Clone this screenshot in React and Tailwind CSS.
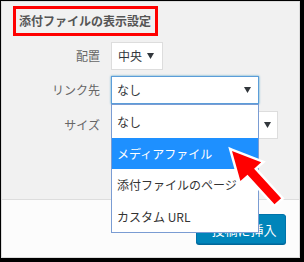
import React from "react";

const Arrow = () => (
  <svg width="7" height="6" viewBox="0 0 7 6" className="shrink-0">
    <polygon points="0,0 7,0 3.5,6" fill="#32373c" />
  </svg>
);

export default function App() {
  return (
    <div
      className="relative w-[304px] h-[262px] bg-black pt-px pl-px pr-[4px] pb-[4px] overflow-hidden"
      style={{ fontFamily: '"Noto Sans CJK JP", "Noto Sans", sans-serif' }}
    >
      <div className="w-[299px] h-[257px] border border-[#dddddd] bg-[#f1f1f1] flex flex-col">
        {/* top section */}
        <div className="h-[197px] flex flex-col">
          <div className="mt-[4px] ml-[11px] w-[145px] h-[30px] border-[3px] border-[#ff0000] flex items-center pl-[3px]">
            <span className="text-[12px] leading-none font-bold text-[#555555]">添付ファイルの表示設定</span>
          </div>
          {/* row 1 */}
          <div className="mt-[6px] flex items-center h-[28px]">
            <div className="w-[98px] text-right text-[12px] text-[#666666] leading-none">配置</div>
            <div className="ml-[11px] w-[52px] h-[28px] bg-white border border-[#dddddd] flex items-center justify-between pl-[6px] pr-[8px]">
              <span className="text-[12px] leading-none text-[#32373c]">中央</span>
              <Arrow />
            </div>
          </div>
          {/* row 2 */}
          <div className="mt-[6px] flex items-center h-[28px]">
            <div className="w-[98px] text-right text-[12px] text-[#666666] leading-none">リンク先</div>
            <div className="ml-[11px] w-[148px] h-[28px] bg-white border border-[#5b9dd9] shadow-[0_0_2px_rgba(30,140,190,0.8)] flex items-center justify-between pl-[5px] pr-[7px]">
              <span className="text-[12px] leading-none text-[#32373c]">なし</span>
              <Arrow />
            </div>
          </div>
          {/* row 3 */}
          <div className="mt-[7px] flex items-center h-[28px]">
            <div className="w-[98px] text-right text-[12px] text-[#666666] leading-none">サイズ</div>
            <div className="ml-[11px] w-[167px] h-[28px] bg-white border border-[#dddddd] flex items-center justify-end pr-[6px]">
              <Arrow />
            </div>
          </div>
        </div>
        {/* footer */}
        <div className="h-[58px] border-t border-[#dddddd] bg-[#fcfcfc] flex justify-end items-start pt-[14px] pr-[13px]">
          <div className="w-[90px] h-[30px] rounded-[3px] bg-[#0085ba] border border-[#0073aa] shadow-[0_1px_0_#006799] flex items-center justify-center pl-[6px]">
            <span className="text-[13px] leading-none text-white">投稿に挿入</span>
          </div>
        </div>
      </div>

      {/* dropdown list */}
      <div className="absolute left-[111px] top-[104px] w-[148px] h-[129px] bg-white border border-[#7a9cd3] pt-px flex flex-col">
        <div className="h-[32px] flex items-center pl-[5px] text-[12px] leading-none text-[#333333]">なし</div>
        <div className="h-[31px] flex items-center pl-[5px] text-[12px] leading-none text-white bg-[#1e90ff]">メディアファイル</div>
        <div className="h-[32px] flex items-center pl-[5px] text-[12px] leading-none text-[#333333] whitespace-nowrap">添付ファイルのページ</div>
        <div className="h-[31px] flex items-center pl-[5px] text-[12px] leading-none text-[#333333]">カスタム URL</div>
      </div>

      {/* red annotation arrow */}
      <svg className="absolute left-0 top-0 pointer-events-none" width="304" height="262" viewBox="0 0 304 262">
        <polygon
          points="232,151 261.2,162.3 254.1,168.7 281.1,198.3 274.5,204.3 247.5,174.7 240.4,181.1"
          fill="#ff0000"
          stroke="#ffffff"
          strokeWidth="5"
          strokeLinejoin="miter"
          paintOrder="stroke"
        />
      </svg>
    </div>
  );
}
